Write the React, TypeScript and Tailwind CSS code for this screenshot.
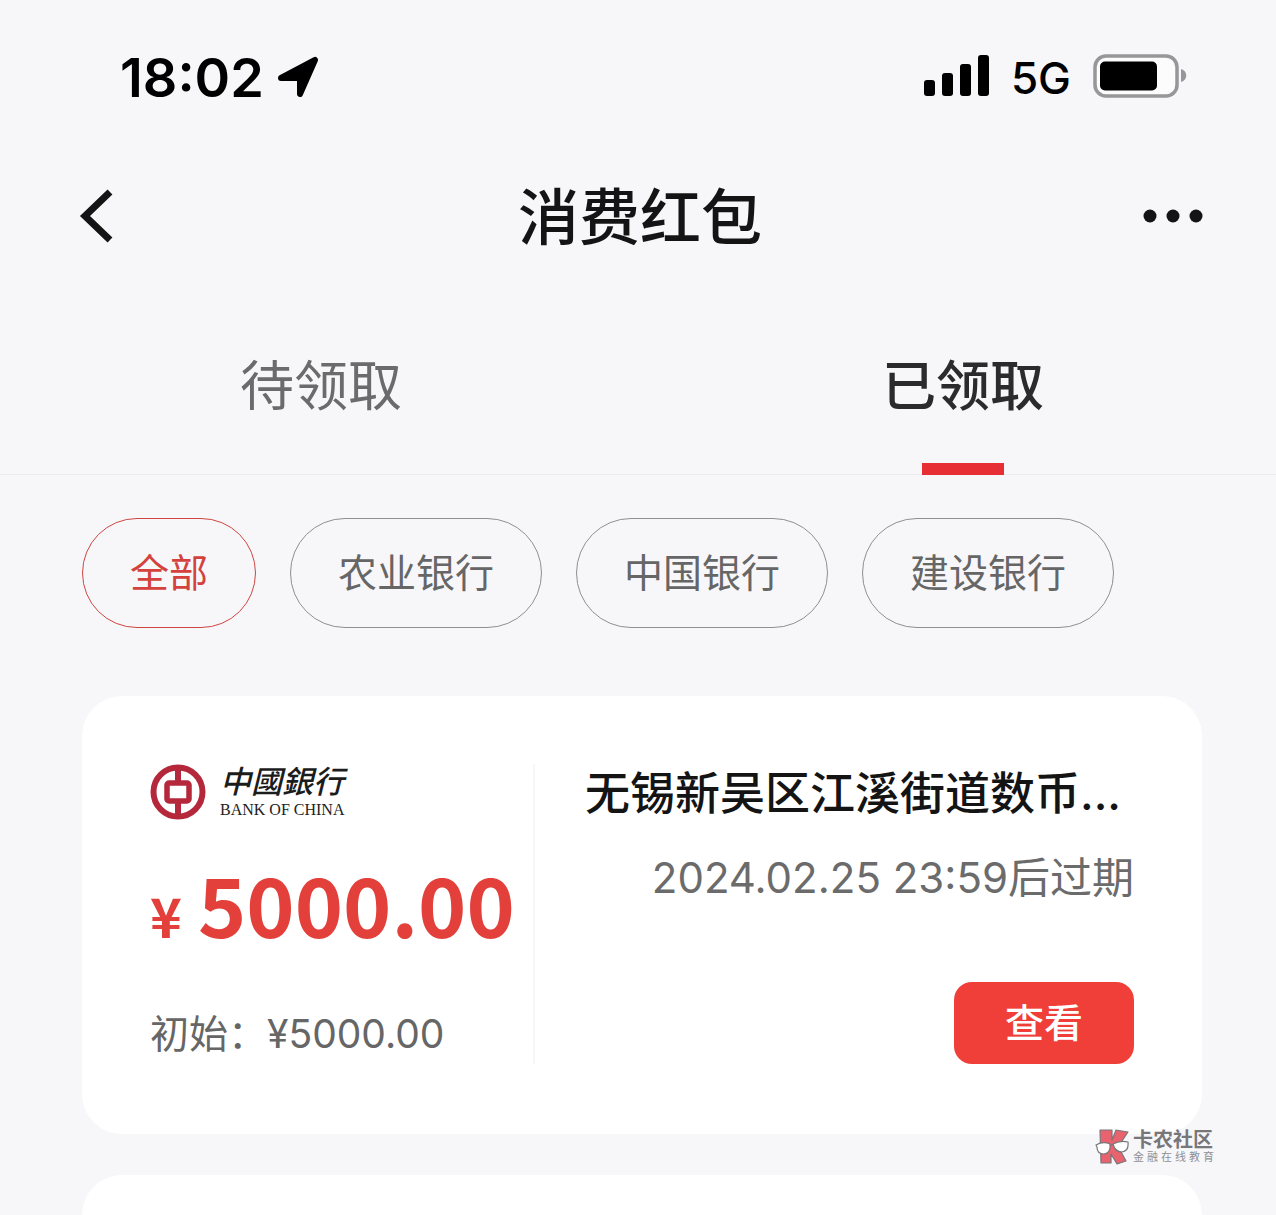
import { useState } from "react";

const TABS = ["待领取", "已领取"];
const BANKS = ["全部", "农业银行", "中国银行", "建设银行"];

function StatusBar() {
  return (
    <div className="flex h-[152px] shrink-0 items-center justify-between pt-1 pr-[88px] pl-[120px] text-black">
      <div className="flex items-center gap-3">
        <span className="text-[54px] leading-[60px] font-semibold">18:02</span>
        <svg className="h-11 w-11" viewBox="0 0 44 44" aria-hidden="true">
          <path
            d="M5 22 39 4 24 38V22Z"
            fill="currentColor"
            stroke="currentColor"
            strokeWidth="6"
            strokeLinejoin="round"
          />
        </svg>
      </div>
      <div className="flex items-center gap-[22px]">
        <svg className="h-[46px] w-[65px]" viewBox="0 0 65 46" fill="currentColor" aria-hidden="true">
          <rect x="0" y="25" width="11" height="16" rx="3" />
          <rect x="18" y="18" width="11" height="23" rx="3" />
          <rect x="36" y="9" width="11" height="32" rx="3" />
          <rect x="54" y="0" width="11" height="41" rx="3" />
        </svg>
        <span className="text-[44px] leading-[60px] font-medium">5G</span>
        <svg className="h-[48px] w-[95px]" viewBox="0 0 95 48" aria-hidden="true">
          <rect x="2" y="2" width="82" height="40" rx="11" fill="#fcfcfd" stroke="#979799" strokeWidth="3.500" />
          <rect x="7" y="7.500" width="57" height="29" rx="5" fill="#000" />
          <path d="M88 15c7 2 7 11 0 13Z" fill="#979799" />
        </svg>
      </div>
    </div>
  );
}

function NavBar() {
  return (
    <header className="grid h-32 shrink-0 grid-cols-[1fr_auto_1fr] items-center pr-[72px] pl-[76px] text-[#141414]">
      <button type="button" aria-label="返回" className="justify-self-start">
        <svg className="h-[58px] w-10" viewBox="0 0 40 58" fill="none" aria-hidden="true">
          <path d="M34 5 9 29 34 53" stroke="currentColor" strokeWidth="7" />
        </svg>
      </button>
      <h1 className="pt-1 text-[61px] leading-[80px] font-medium">消费红包</h1>
      <button type="button" aria-label="更多" className="justify-self-end">
        <svg className="h-[58px] w-[62px]" viewBox="0 0 62 58" fill="currentColor" aria-hidden="true">
          <circle cx="8" cy="29" r="6.500" />
          <circle cx="31" cy="29" r="6.500" />
          <circle cx="54" cy="29" r="6.500" />
        </svg>
      </button>
    </header>
  );
}

function BankLogo() {
  return (
    <div className="flex h-14 items-center gap-[14px]" role="img" aria-label="中國銀行 BANK OF CHINA">
      <svg className="h-14 w-14" viewBox="0 0 56 56" fill="none" stroke="#b5283c" aria-hidden="true">
        <circle cx="28" cy="28" r="24.500" strokeWidth="6" />
        <path d="M28 4V19M28 38V52" strokeWidth="6" />
        <rect x="17" y="19" width="22" height="18" rx="2" strokeWidth="5.500" />
      </svg>
      <div className="flex flex-col text-[#1c1c1c]">
        <span className="font-['Noto_Sans_CJK_TC',sans-serif] text-[31px] leading-9 font-medium italic">
          中國銀行
        </span>
        <span className="font-['Liberation_Serif',serif] text-[16px] leading-6 whitespace-nowrap text-[#222]">
          BANK OF CHINA
        </span>
      </div>
    </div>
  );
}

function CouponCard() {
  return (
    <article className="flex rounded-[40px] bg-white px-[68px] pt-[68px] pb-[70px]">
      <div className="flex w-[385px] shrink-0 flex-col border-r-2 border-[#f7f7f9]">
        <BankLogo />
        <p className="mt-7 flex items-baseline gap-4 font-['Noto_Sans_CJK_SC',sans-serif] font-bold text-[#e4403b]">
          <span className="text-[54px] leading-[60px]">¥</span>
          <span className="text-[82px] leading-[110px]">5000.00</span>
        </p>
        <p className="mt-[46px] text-[39px] leading-[60px] whitespace-nowrap text-[#666]">初始：¥5000.00</p>
      </div>
      <div className="flex min-w-0 flex-1 flex-col items-end pl-[50px]">
        <h2 className="w-full text-[45px] leading-[60px] font-medium whitespace-nowrap text-[#141414]">
          无锡新吴区江溪街道数币...
        </h2>
        <p className="mt-6 text-[42px] leading-[60px] whitespace-nowrap text-[#6b6b6b]">2024.02.25 23:59后过期</p>
        <button
          type="button"
          className="mt-[74px] h-[82px] w-[180px] rounded-[18px] bg-[#f03e39] text-[39px] leading-[60px] font-medium text-white"
        >
          查看
        </button>
      </div>
    </article>
  );
}

function CommunityMark() {
  return (
    <div className="absolute right-[59px] bottom-[50px] flex items-center gap-1">
      <svg className="h-9 w-[34px]" viewBox="0 0 34 36" aria-hidden="true">
        <g fill="#e8636e" stroke="#77777a" strokeWidth="1.200" strokeLinejoin="round">
          <path d="M5 1H17V11L21 1 33 3 25 15V21L31 32 22 35 16 25V34H6Z" />
          <path d="M1 16Q8 12 15 15 16 24 9 25 2 25 2 18Z" fill="#fff" />
          <path d="M18 15Q25 11 33 13 34 22 27 23 20 23 18 15Z" fill="#fff" />
          <path d="M15 17Q16.500 15 18 16" fill="none" />
        </g>
      </svg>
      <div className="flex flex-col whitespace-nowrap">
        <span className="text-[20px] leading-[20px] font-bold text-[#77777a]">卡农社区</span>
        <span className="text-[11px] leading-[14px] tracking-[3px] text-[#909094]">金融在线教育</span>
      </div>
    </div>
  );
}

export default function App() {
  const [tab, setTab] = useState(1);
  const [bank, setBank] = useState(0);

  return (
    <div className="relative flex h-screen flex-col overflow-hidden bg-[#f7f7fa] font-[Inter,'Noto_Sans_CJK_SC',sans-serif]">
      <StatusBar />
      <NavBar />
      <nav className="-mr-2 grid h-[195px] shrink-0 grid-cols-2 border-b border-[#ebebee]">
        {TABS.map((label, i) => (
          <button
            key={label}
            type="button"
            onClick={() => setTab(i)}
            className={
              i === tab
                ? "-mb-px flex flex-col items-center justify-end text-[54px] leading-[80px] font-medium text-[#2b2b2d]"
                : "-mb-px flex flex-col items-center justify-end text-[54px] leading-[80px] text-[#6b6b6d]"
            }
          >
            <span>{label}</span>
            <span className={i === tab ? "mt-9 h-3 w-[82px] bg-[#e62e34]" : "mt-9 h-3 w-[82px]"} />
          </button>
        ))}
      </nav>
      <div className="flex shrink-0 gap-[34px] px-[82px] pt-[43px]">
        {BANKS.map((name, i) => (
          <button
            key={name}
            type="button"
            onClick={() => setBank(i)}
            className={
              i === bank
                ? "h-[110px] rounded-full border border-[#cf4541] px-[47px] text-[39px] whitespace-nowrap text-[#d3423d]"
                : "h-[110px] rounded-full border border-[#8f8f92] px-[47px] text-[39px] whitespace-nowrap text-[#666]"
            }
          >
            {name}
          </button>
        ))}
      </div>
      <main className="flex flex-col gap-[41px] pt-[68px] pr-[74px] pl-[82px]">
        <CouponCard />
        <article className="h-[438px] shrink-0 rounded-[40px] bg-white" />
      </main>
      <CommunityMark />
    </div>
  );
}
